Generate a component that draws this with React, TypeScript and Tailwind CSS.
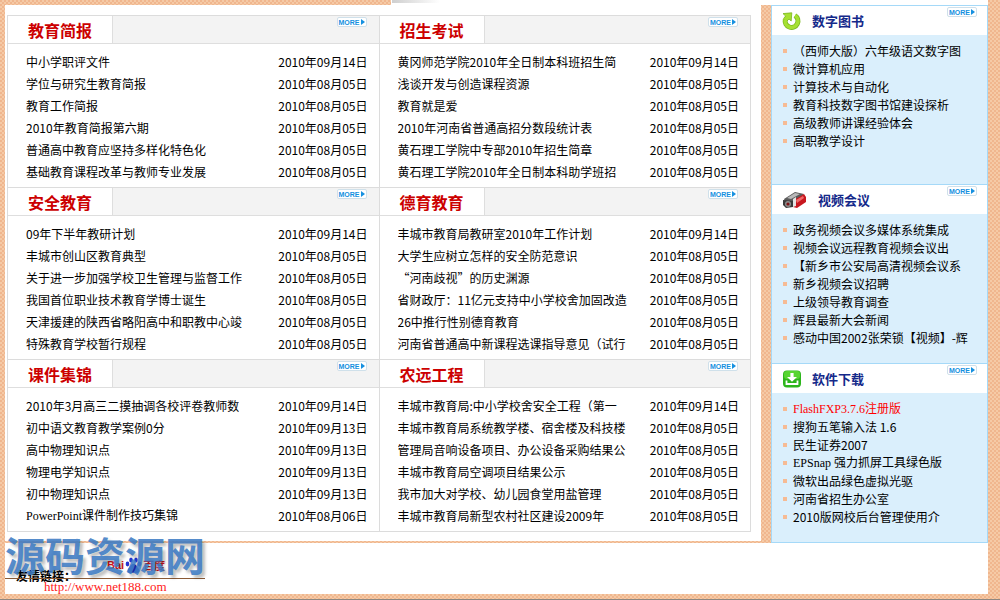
import type { ReactNode } from "react";

type Item = { title: string; date: string; serif?: boolean };
type Section = { heading: string; items: Item[] };
type SideItem = { title: string; hot?: boolean; serif?: boolean };
type SidePanel = { heading: string; icon: ReactNode; items: SideItem[] };

const D14 = "2010年09月14日";
const D13 = "2010年09月13日";
const D05 = "2010年08月05日";
const D06 = "2010年08月06日";

const sections: Section[] = [
  {
    heading: "教育简报",
    items: [
      { title: "中小学职评文件", date: D14 },
      { title: "学位与研究生教育简报", date: D05 },
      { title: "教育工作简报", date: D05 },
      { title: "2010年教育简报第六期", date: D05 },
      { title: "普通高中教育应坚持多样化特色化", date: D05 },
      { title: "基础教育课程改革与教师专业发展", date: D05 },
    ],
  },
  {
    heading: "招生考试",
    items: [
      { title: "黄冈师范学院2010年全日制本科班招生简", date: D14 },
      { title: "浅谈开发与创造课程资源", date: D05 },
      { title: "教育就是爱", date: D05 },
      { title: "2010年河南省普通高招分数段统计表", date: D05 },
      { title: "黄石理工学院中专部2010年招生简章", date: D05 },
      { title: "黄石理工学院2010年全日制本科助学班招", date: D05 },
    ],
  },
  {
    heading: "安全教育",
    items: [
      { title: "09年下半年教研计划", date: D14 },
      { title: "丰城市创山区教育典型", date: D05 },
      { title: "关于进一步加强学校卫生管理与监督工作", date: D05 },
      { title: "我国首位职业技术教育学博士诞生", date: D05 },
      { title: "天津援建的陕西省略阳高中和职教中心竣", date: D05 },
      { title: "特殊教育学校暂行规程", date: D05 },
    ],
  },
  {
    heading: "德育教育",
    items: [
      { title: "丰城市教育局教研室2010年工作计划", date: D14 },
      { title: "大学生应树立怎样的安全防范意识", date: D05 },
      { title: "“河南歧视”的历史渊源", date: D05 },
      { title: "省财政厅：11亿元支持中小学校舍加固改造", date: D05 },
      { title: "26中推行性别德育教育", date: D05 },
      { title: "河南省普通高中新课程选课指导意见（试行", date: D05 },
    ],
  },
  {
    heading: "课件集锦",
    items: [
      { title: "2010年3月高三二摸抽调各校评卷教师数", date: D14 },
      { title: "初中语文教育教学案例0分", date: D13 },
      { title: "高中物理知识点", date: D13 },
      { title: "物理电学知识点", date: D13 },
      { title: "初中物理知识点", date: D13 },
      { title: "PowerPoint课件制作技巧集锦", date: D06, serif: true },
    ],
  },
  {
    heading: "农远工程",
    items: [
      { title: "丰城市教育局:中小学校舍安全工程（第一", date: D14 },
      { title: "丰城市教育局系统教学楼、宿舍楼及科技楼", date: D05 },
      { title: "管理局音响设备项目、办公设备采购结果公", date: D05 },
      { title: "丰城市教育局空调项目结果公示", date: D05 },
      { title: "我市加大对学校、幼儿园食堂用盐管理", date: D05 },
      { title: "丰城市教育局新型农村社区建设2009年", date: D05 },
    ],
  },
];

function RefreshIcon() {
  return (
    <svg width="20" height="20" viewBox="0 0 20 20" aria-hidden="true">
      <path d="M13 4.6A6.400 6.400 0 1 1 3.300 8.500" fill="none" stroke="#78b51c" strokeWidth="5" />
      <path d="M1 2.600 9.800 1.800 9.200 10 7 8 4.500 10.500 1.600 7.500 3.600 5z" fill="#a6e032" stroke="#78b51c" strokeWidth="0.8" />
      <path d="M13 4.6A6.400 6.400 0 1 1 3.300 8.500" fill="none" stroke="#a6e032" strokeWidth="3.600" />
    </svg>
  );
}

function CameraIcon() {
  return (
    <svg width="26" height="18" viewBox="0 0 26 18" aria-hidden="true">
      <path d="M2 8 13 1l9 2-8 8-10 4z" fill="#5b5b5b" />
      <path d="M5 7 13 2l5 1-9 5z" fill="#b9b9b9" />
      <path d="M12 9 22 3l2 3v5l-9 6-4-1z" fill="#c8171f" />
      <path d="M14 9l7-4 1 2-7 5z" fill="#ef6a6a" />
      <path d="M11 8l3-2v9l-3 1z" fill="#e4e4e4" />
      <path d="M1 9l10 1v6l-7 1-3-3z" fill="#3a3a3a" />
      <circle cx="6" cy="13" r="3" fill="#8d8d8d" />
      <circle cx="6" cy="13" r="1.6" fill="#7c1115" />
    </svg>
  );
}

function DownloadIcon() {
  return (
    <svg width="20" height="18" viewBox="0 0 20 18" aria-hidden="true">
      <rect x="1" y="0.5" width="18" height="17" rx="4" fill="#2db51c" />
      <rect x="2" y="1" width="16" height="8" rx="3" fill="#57d531" />
      <path d="M8.400 3h3.200v4h3.400L10 11.800 5 7h3.400z" fill="#fff" />
      <path d="M4.500 10.500v3.500h11v-3.500" fill="none" stroke="#fff" strokeWidth="1.8" />
    </svg>
  );
}

const panels: SidePanel[] = [
  {
    heading: "数字图书",
    icon: <RefreshIcon />,
    items: [
      { title: "（西师大版）六年级语文数字图" },
      { title: "微计算机应用" },
      { title: "计算技术与自动化" },
      { title: "教育科技数字图书馆建设探析" },
      { title: "高级教师讲课经验体会" },
      { title: "高职教学设计" },
    ],
  },
  {
    heading: "视频会议",
    icon: <CameraIcon />,
    items: [
      { title: "政务视频会议多媒体系统集成" },
      { title: "视频会议远程教育视频会议出" },
      { title: "【新乡市公安局高清视频会议系" },
      { title: "新乡视频会议招聘" },
      { title: "上级领导教育调查" },
      { title: "辉县最新大会新闻" },
      { title: "感动中国2002张荣锁【视频】-辉" },
    ],
  },
  {
    heading: "软件下载",
    icon: <DownloadIcon />,
    items: [
      { title: "FlashFXP3.7.6注册版", hot: true, serif: true },
      { title: "搜狗五笔输入法 1.6" },
      { title: "民生证券2007" },
      { title: "EPSnap 强力抓屏工具绿色版", serif: true },
      { title: "微软出品绿色虚拟光驱" },
      { title: "河南省招生办公室" },
      { title: "2010版网校后台管理使用介" },
    ],
  },
];

const serifFont = "font-['Liberation_Serif','Noto_Sans_CJK_SC',serif]";

function MoreLink() {
  return (
    <a
      href="#"
      className="mt-px flex h-[10px] w-[30px] items-center justify-center gap-px rounded-[2px] border border-[#cfe0ea] bg-white font-['Liberation_Sans',sans-serif] text-[7px] font-bold leading-none text-[#1590e0]"
    >
      MORE
      <svg width="4" height="6" viewBox="0 0 4 6" aria-hidden="true">
        <path d="M0 0l4 3-4 3z" fill="#1590e0" />
      </svg>
    </a>
  );
}

function NewsSection({ heading, items }: Section) {
  return (
    <section className="min-w-0 border-t border-l border-[#dcdcdc]">
      <header className="flex h-7 items-start justify-between border-b border-[#dedede] bg-[#f3f3f3] pr-3">
        <h2 className="flex h-full w-[105px] items-center border-r border-[#dedede] bg-white pl-5 text-base leading-none font-bold text-[#cc0000]">
          {heading}
        </h2>
        <MoreLink />
      </header>
      <ul className="pt-[7px] pr-[11px] pb-1 pl-[18px]">
        {items.map((item) => (
          <li key={item.title} className="flex h-[22px] items-center justify-between">
            <a href="#" className={item.serif ? `truncate ${serifFont}` : "truncate"}>
              {item.title}
            </a>
            <span className="shrink-0">{item.date}</span>
          </li>
        ))}
      </ul>
    </section>
  );
}

function Panel({ heading, icon, items }: SidePanel) {
  return (
    <section className="h-[179px] border-t border-[#a5d9f8]">
      <header className="flex h-[29px] items-start justify-between bg-white pr-[10px]">
        <h2 className="flex h-full items-center gap-[10px] pl-[10px] text-[13px] leading-none font-bold text-[#14298a]">
          {icon}
          {heading}
        </h2>
        <MoreLink />
      </header>
      <ul className="pt-[7px] pl-[11px]">
        {items.map((item) => (
          <li key={item.title} className="flex h-[18px] items-center gap-[6px]">
            <span className="size-1 shrink-0 bg-[#f6bb94]" />
            <a
              href="#"
              className={`whitespace-nowrap ${item.serif ? serifFont : ""} ${item.hot ? "text-[#ff0000]" : ""}`}
            >
              {item.title}
            </a>
          </li>
        ))}
      </ul>
    </section>
  );
}

function BaiduLogo() {
  return (
    <a href="#" className="flex items-center text-[11px] leading-none font-bold text-[#d8131c]">
      <span className="font-['Liberation_Sans',sans-serif]">Bai</span>
      <svg width="19" height="17" viewBox="0 0 17 17" aria-hidden="true" fill="#2334d0">
        <ellipse cx="2.500" cy="7" rx="1.800" ry="2.400" />
        <ellipse cx="6" cy="3" rx="1.800" ry="2.500" />
        <ellipse cx="11" cy="3" rx="1.800" ry="2.500" />
        <ellipse cx="14.500" cy="7" rx="1.800" ry="2.400" />
        <path d="M8.500 7c3 0 3 2.500 5 4.500 2 2.500 0 5-2.500 4.500-2-.5-3-.5-5 0-2.500.5-4.500-2-2.500-4.500C5.500 9.500 5.500 7 8.500 7z" />
      </svg>
      <span>百度</span>
    </a>
  );
}

export default function App() {
  return (
    <div className="flex min-h-screen flex-col border-b border-[#8f8780] bg-[repeating-conic-gradient(#f5caa6_0%_25%,#f0b68e_0%_50%)] bg-[length:4px_4px] pr-3 pb-[5px] pl-[5px] font-['Noto_Sans_CJK_SC','Liberation_Sans',sans-serif] text-xs text-black">
      <div className="flex h-[5px]">
        <div className="w-[386px]" />
        <div className="flex-1 bg-white pl-px">
          <div className="h-[3px] w-12 bg-linear-to-r from-[#cfcfcf] to-white" />
        </div>
      </div>

      <div className="flex">
        <main className="mb-[2px] min-w-0 flex-1 bg-white pt-[10px] pr-[10px] pl-[2px]">
          <div className="grid grid-cols-2 border-r border-b border-[#dcdcdc]">
            {sections.map((section) => (
              <NewsSection key={section.heading} {...section} />
            ))}
          </div>
        </main>

        <aside className="ml-[10px] w-[217px] shrink-0 border border-t-0 border-[#a5d9f8] bg-[#daeffc]">
          {panels.map((panel) => (
            <Panel key={panel.heading} {...panel} />
          ))}
        </aside>
      </div>

      {/* Friend links */}
      <footer className="relative flex-1 bg-white">
        <div className="flex pt-[14px] pl-[102px]">
          <BaiduLogo />
        </div>
        <p className="absolute top-[27px] left-[11px] leading-3 font-bold">友情链接：</p>

        {/* Site stamp */}
        <div className="absolute -top-[9px] left-0 w-[200px]">
          <p className="border-b border-[#8a5a35] pb-1 text-[40px] leading-10 font-bold text-[#3f7cc4]/90 [text-shadow:3px_3px_3px_rgba(0,0,0,0.25)]">
            源码资源网
          </p>
          <a href="#" className="block pl-[39px] font-['Liberation_Serif',serif] text-[13px] leading-4 text-[#ff1a1a]">
            http://www.net188.com
          </a>
        </div>
      </footer>
    </div>
  );
}
